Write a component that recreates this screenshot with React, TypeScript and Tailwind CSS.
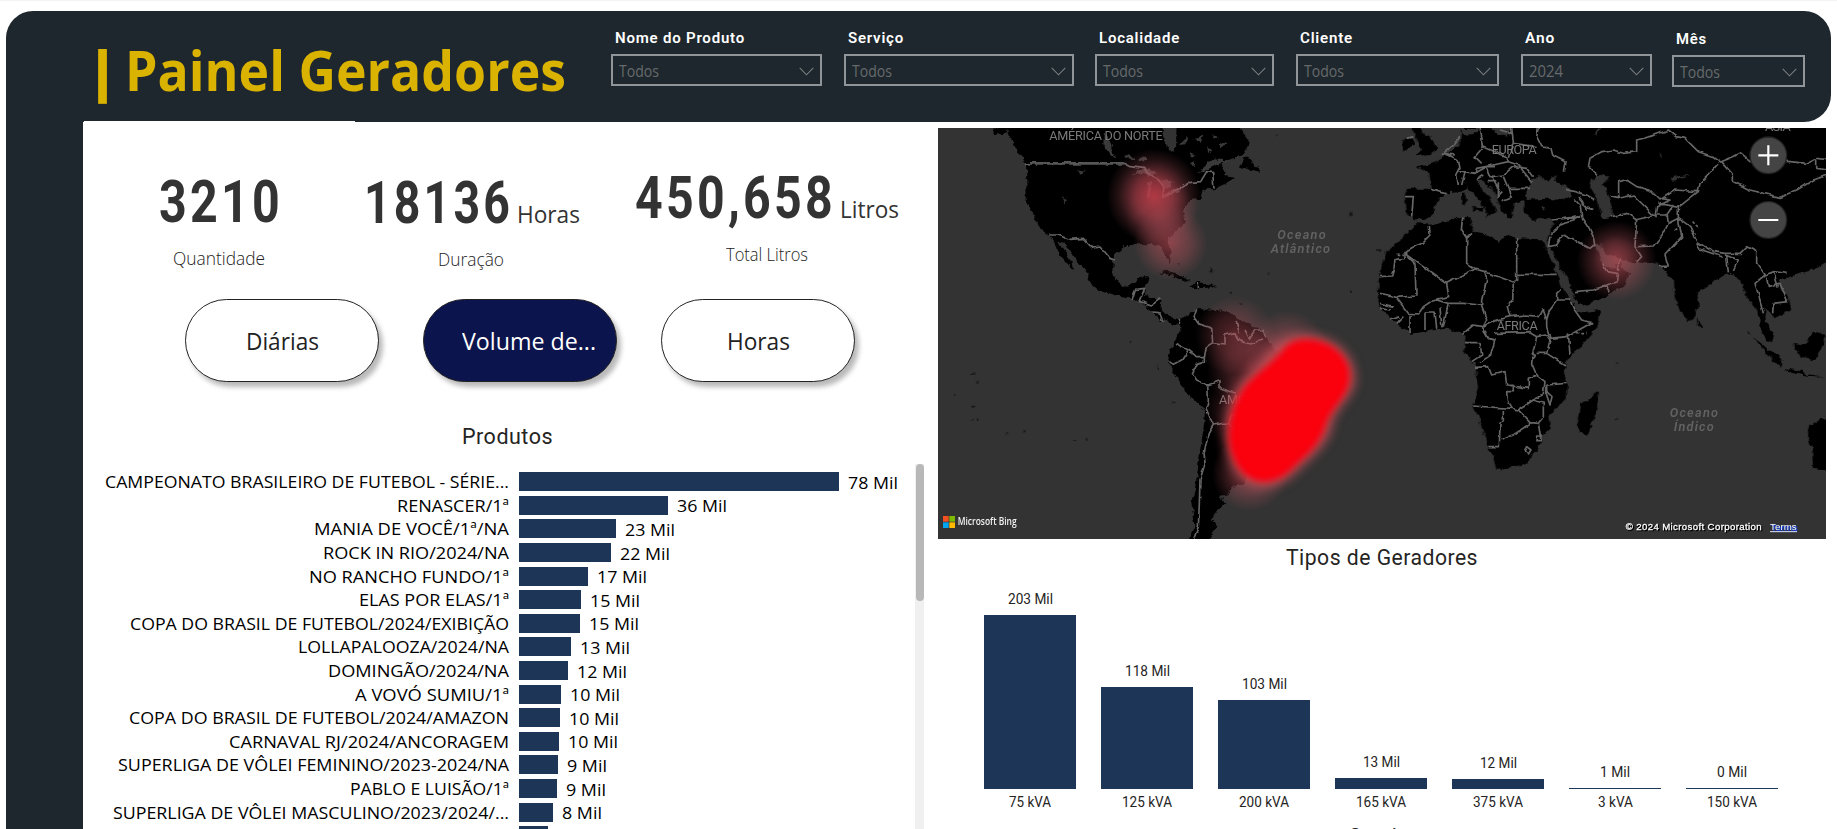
import { useLayoutEffect, useRef } from "react";
import type { ReactNode } from "react";
import clsx from "clsx";

const SEGOE = "font-['Open_Sans',sans-serif]";
const DIN = "font-['Roboto',sans-serif]";

/** One line of text, condensed or widened to fill exactly `w` pixels. */
function Fit({ w, className, children }: { w: number; className?: string; children: ReactNode }) {
  const ref = useRef<HTMLSpanElement>(null);
  useLayoutEffect(() => {
    const el = ref.current;
    if (!el) return;
    el.style.transform = "none";
    const natural = el.getBoundingClientRect().width;
    if (natural) el.style.transform = `scaleX(${w / natural})`;
  }, [w]);
  return (
    <span className={clsx("block shrink-0 whitespace-nowrap", className)} style={{ width: w }}>
      <span ref={ref} className="inline-block origin-left">
        {children}
      </span>
    </span>
  );
}

const filters = [
  { label: "Nome do Produto", lw: 130, value: "Todos", vw: 40, box: "w-[211px]", gap: "", top: "" },
  { label: "Serviço", lw: 56, value: "Todos", vw: 40, box: "w-[230px]", gap: "ml-[22px]", top: "" },
  { label: "Localidade", lw: 81, value: "Todos", vw: 40, box: "w-[179px]", gap: "ml-[21px]", top: "" },
  { label: "Cliente", lw: 53, value: "Todos", vw: 40, box: "w-[203px]", gap: "ml-[22px]", top: "" },
  { label: "Ano", lw: 30, value: "2024", vw: 34, box: "w-[131px]", gap: "ml-[22px]", top: "" },
  { label: "Mês", lw: 31, value: "Todos", vw: 40, box: "w-[133px]", gap: "ml-[20px]", top: "mt-px" },
];

const products: [string, number, string, number][] = [
  ["CAMPEONATO BRASILEIRO DE FUTEBOL - SÉRIE...", 404, "78 Mil", 320],
  ["RENASCER/1ª", 112, "36 Mil", 149],
  ["MANIA DE VOCÊ/1ª/NA", 195, "23 Mil", 97],
  ["ROCK IN RIO/2024/NA", 186, "22 Mil", 92],
  ["NO RANCHO FUNDO/1ª", 200, "17 Mil", 69],
  ["ELAS POR ELAS/1ª", 150, "15 Mil", 61.5],
  ["COPA DO BRASIL DE FUTEBOL/2024/EXIBIÇÃO", 379, "15 Mil", 61],
  ["LOLLAPALOOZA/2024/NA", 211, "13 Mil", 52],
  ["DOMINGÃO/2024/NA", 181, "12 Mil", 49],
  ["A VOVÓ SUMIU/1ª", 154, "10 Mil", 42],
  ["COPA DO BRASIL DE FUTEBOL/2024/AMAZON", 380, "10 Mil", 41],
  ["CARNAVAL RJ/2024/ANCORAGEM", 280, "10 Mil", 40],
  ["SUPERLIGA DE VÔLEI FEMININO/2023-2024/NA", 391, "9 Mil", 39],
  ["PABLO E LUISÃO/1ª", 159, "9 Mil", 38],
  ["SUPERLIGA DE VÔLEI MASCULINO/2023/2024/...", 396, "8 Mil", 34],
  ["", 0, "", 29],
];

const types: [string, number, string, number, number][] = [
  ["203 Mil", 45, "75 kVA", 42, 174.5],
  ["118 Mil", 45, "125 kVA", 50, 102],
  ["103 Mil", 45, "200 kVA", 50, 89],
  ["13 Mil", 37, "165 kVA", 50, 11],
  ["12 Mil", 37, "375 kVA", 50, 10.5],
  ["1 Mil", 30, "3 kVA", 35, 1.5],
  ["0 Mil", 30, "150 kVA", 50, 1.5],
];

function Header() {
  return (
    <header className="mx-[6px] mt-[10px] flex h-[111px] shrink-0 rounded-r-[27px] rounded-tl-[27px] bg-[#1e272d]">
      <h1 className={clsx("flex w-[605px] shrink-0 pl-[74px] pt-[25px] text-[55px] font-bold leading-[68px] text-[#dab200]", SEGOE)}>
        <Fit w={45}>|</Fit>
        <Fit w={441}>Painel Geradores</Fit>
      </h1>
      {filters.map((f) => (
        <div key={f.label} className={clsx("shrink-0 pt-[17px]", f.gap, f.top)}>
          <Fit w={f.lw} className={clsx("ml-[4px] text-[15.5px] font-semibold leading-[20px] tracking-[0.8px] text-white", DIN)}>
            {f.label}
          </Fit>
          <div className={clsx("mt-[6px] flex h-[32px] items-center justify-between border-2 border-[#8f9598] pl-[6px] pr-[6px]", f.box)}>
            <Fit w={f.vw} className={clsx("mt-[2px] text-[15.5px] leading-[20px] text-[#666a6c]", SEGOE)}>
              {f.value}
            </Fit>
            <svg className="mt-[2px] h-[9px] w-[15px]" viewBox="0 0 15 9" fill="none" stroke="#7b7f81" strokeWidth="1.1">
              <path d="M.7 .8 7.5 7.8 14.3 .8" />
            </svg>
          </div>
        </div>
      ))}
    </header>
  );
}

function Kpi(p: { value: string; w: number; unit?: string; uw?: number; label: string; lw: number; className: string; labelClass: string }) {
  return (
    <div className={clsx("flex shrink-0 flex-col items-center", p.className)}>
      <div className="flex items-baseline gap-[4px]">
        <Fit w={p.w} className={clsx("text-[59px] font-bold leading-[60px] tracking-[4px] text-[#333]", DIN)}>
          {p.value}
        </Fit>
        {p.unit && (
          <Fit w={p.uw ?? 60} className={clsx("text-[24px] leading-[30px] text-[#333]", SEGOE)}>
            {p.unit}
          </Fit>
        )}
      </div>
      <Fit w={p.lw} className={clsx("text-[18px] font-light leading-[20px] text-[#222]", SEGOE, p.labelClass)}>
        {p.label}
      </Fit>
    </div>
  );
}

function Pill({ label, w, active }: { label: string; w: number; active?: boolean }) {
  return (
    <button
      className={clsx(
        "flex h-[83px] w-[194px] shrink-0 items-center justify-center rounded-full border border-[#222] text-[24px] leading-[30px] shadow-[4px_5px_5px_rgba(0,0,0,0.28)]",
        SEGOE,
        active ? "bg-[#0c144d] pl-[18px] text-white" : "bg-white text-[#222]",
      )}
    >
      <Fit w={w} className="mt-px text-left">
        {label}
      </Fit>
    </button>
  );
}

function Products() {
  return (
    <div className="mt-[15px] flex h-[365px] overflow-hidden">
      <div className="w-[831px] shrink-0 pt-[6px]">
        {products.map(([name, w, val, bar], i) => (
          <div key={i} className={clsx("flex h-[23.6px] items-center text-[17px] leading-[23px] text-black", SEGOE)}>
            <div className="mr-[10px] flex w-[425px] shrink-0 justify-end">
              {name && <Fit w={w}>{name}</Fit>}
            </div>
            <div className="h-[19px] bg-[#1d3557]" style={{ width: bar }} />
            {val && (
              <Fit w={val.length > 5 ? 50 : 40} className="ml-[9px] mt-px">
                {val}
              </Fit>
            )}
          </div>
        ))}
      </div>
      <div className="h-full w-[9px] bg-[#f0f0f0]">
        <div className="ml-px h-[137px] w-[8px] rounded-full bg-[#b8b8b8]" />
      </div>
    </div>
  );
}

function WorldMap() {
  const label = "font-['Roboto',sans-serif]";
  return (
    <svg className="block h-[411px] w-[888px] bg-[#333]" viewBox="24 24 2664 1233" fill="none">
      <defs>
        <filter id="rough" x="0" y="0" width="2700" height="1270" filterUnits="userSpaceOnUse" colorInterpolationFilters="sRGB">
          <feTurbulence type="fractalNoise" baseFrequency="0.05" numOctaves="3" seed="4" />
          <feDisplacementMap in="SourceGraphic" scale="18" xChannelSelector="R" yChannelSelector="G" />
        </filter>
        <filter id="wavy" x="0" y="0" width="2700" height="1270" filterUnits="userSpaceOnUse" colorInterpolationFilters="sRGB">
          <feTurbulence type="fractalNoise" baseFrequency="0.04" numOctaves="2" seed="4" />
          <feDisplacementMap in="SourceGraphic" scale="12" xChannelSelector="R" yChannelSelector="G" />
        </filter>
        <filter id="soft" x="800" y="580" width="600" height="660" filterUnits="userSpaceOnUse">
          <feGaussianBlur stdDeviation="9" />
        </filter>
        <filter id="halo" x="750" y="540" width="700" height="760" filterUnits="userSpaceOnUse">
          <feGaussianBlur stdDeviation="16" />
        </filter>
        <radialGradient id="heat">
          <stop offset="0" stopColor="#c03844" stopOpacity=".92" />
          <stop offset=".4" stopColor="#b54450" stopOpacity=".66" />
          <stop offset=".75" stopColor="#a8505a" stopOpacity=".22" />
          <stop offset="1" stopColor="#a8505a" stopOpacity="0" />
        </radialGradient>
        <radialGradient id="warm">
          <stop offset="0" stopColor="#c0505a" stopOpacity=".6" />
          <stop offset=".5" stopColor="#b5525c" stopOpacity=".38" />
          <stop offset="1" stopColor="#a8505a" stopOpacity="0" />
        </radialGradient>
      </defs>

      <g filter="url(#rough)">
        {/* Americas */}
        <g fill="#000">
          <path d="M225 0 240 50 265 100 288 128 290 240 305 282 328 320 358 345 372 368 384 395 405 422 430 454 426 430 402 390 386 362 402 368 428 402 448 432 476 460 472 482 502 507 560 527 600 532 640 553 668 575 690 597 722 610 750 614 770 590 745 597 715 590 692 568 694 537 642 528 645 500 657 470 625 475 610 492 575 502 550 462 552 402 580 379 620 375 650 370 690 376 704 402 720 430 723 400 710 358 766 306 760 270 786 240 816 235 820 206 850 208 918 176 890 164 874 150 880 124 938 108 962 68 940 40 925 0 740 0 738 90 722 96 700 50 690 0Z" />
          <path d="M930 140 945 112 962 118 990 156 965 150Z M685 458 712 452 782 480 760 483 722 466Z M778 501 800 485 835 493 862 502 800 505Z M750 612 768 588 806 564 872 572 905 580 925 600 990 628 1010 650 1030 690 1100 725 1190 720 1210 780 1160 900 1090 1000 980 1040 950 1070 945 1092 905 1100 896 1126 868 1130 886 1146 865 1170 845 1196 862 1220 838 1260 778 1260 796 1218 784 1150 796 1100 808 1010 820 930 826 866 772 826 745 780 714 724 722 684 752 634Z" />
          <path d="M195 24H235L228 40 195 42Z M840 445l10 12M745 432h6" stroke="#000" strokeWidth="3" />
        </g>
        <g fill="#3a3a3a">
          <path d="M603 165 640 142 684 160 660 168 640 158Z M648 232 652 184 668 184 660 232Z M676 174 728 186 722 206 700 196Z M695 234 735 208 762 200 735 220Z M522 40 535 60 556 112 545 108 520 70Z M586 104l30 6-4 8-26-4Z M632 110h16v14h-16Z M444 148l22 4-14 10Z M398 232l12 8-4 14Z M800 160 850 118 905 122 865 132 830 150Z M745 70l30-15-6 20Z M790 55l30-8-8 18Z M850 45l14 6-14 8Z M780 95l14 8-10 14Z M830 80l14 8-6 12Z M870 65l20 8-20 8Z M780 135l10-10 4 14Z" />
        </g>
        {/* Europe, Asia, Africa */}
        <g transform="translate(1350 0)">
          <g fill="#000">
            <path d="M245 0 242 52 234 78 190 106 168 124 108 140 148 158 155 206 80 206 74 228 82 290 104 297 132 300 160 288 162 262 182 236 204 220 236 216 258 202 286 226 312 262 322 290 350 276 336 246 300 204 288 182 312 182 346 218 362 270 386 296 402 268 396 250 432 240 434 276 462 300 512 290 520 312 508 345 500 380 512 386 556 470 578 514 595 556 642 546 690 520 732 500 750 460 722 440 722 420 762 430 822 425 848 442 862 466 882 476 884 530 902 572 925 604 942 590 956 558 952 522 988 496 1022 470 1042 460 1070 468 1086 492 1094 522 1124 560 1140 592 1146 640 1172 670 1180 640 1154 604 1152 566 1172 578 1184 594 1234 570 1226 532 1200 505 1198 478 1232 470 1292 450 1350 425V0Z" />
            <path d="M112 310 148 314 242 293 272 295 276 330 330 350 356 366 376 345 410 355 482 358 496 382 520 430 546 500 580 556 592 578 664 570 652 620 602 680 574 702 558 726 552 760 564 790 560 836 530 866 505 890 512 930 486 946 480 976 440 1030 400 1040 350 1050 340 1014 324 980 310 940 300 900 280 860 296 796 286 740 275 726 252 700 256 660 245 640 200 626 150 632 90 642 56 618 18 582-6 552-6 524-2 460 18 400 75 345Z" />
            <path d="M110 0 128 40 160 62 176 90 150 106 108 108 126 86 112 62 96 24Z M66 62 96 50 104 76 70 92Z M950 594 966 620 955 624Z M1105 640 1140 668 1206 716 1206 740 1180 724 1140 676 1100 630Z M1210 744 1250 750 1292 764 1336 770 1290 768 1240 760Z M1240 672 1272 676 1300 634 1334 645 1326 680 1306 720 1260 714Z M1350 888 1285 914 1284 950 1300 1000 1298 1046 1350 1054Z M652 810 658 840 640 900 625 940 600 942 592 910 600 850 636 834Z M245 218h12v38h-10Z M275 262l40 0-10 14-24-8Z" />
          </g>
          <g fill="#333">
            <path d="M440 226 450 186 480 164 500 186 530 164 522 186 566 204 576 226 545 240 500 236 440 240Z M630 182 660 164 690 170 668 192 682 216 692 240 696 290 670 296 655 270 650 236 632 206Z M640 368 660 370 682 402 716 414 720 428 704 444 676 440 664 420Z M240 24 300 24 280 42 250 45Z M330 24 400 24 380 50 345 38Z M480 262l16 0-4 10Z M838 95l8 18-8 2Z M870 172l60-8-50 18Z M640 40l22-16-10 20Z" />
          </g>
        </g>
        <g fill="#151515">
          <path d="M124 758h12v6h-12Z M138 780l6 6-8 2Z M68 822h8v5h-8Z M122 860h10v5h-10Z M124 900h6v4h-6Z M140 896h5v4h-5Z M228 938h6v5h-6Z M280 934h6v4h-6Z M432 958h6v5h-6Z M470 952h5v4h-5Z M602 665h5v5h-5Z M728 838l10 12-8-2Z M1258 278h7v6h-7Z M1262 512h6v6h-6Z M1014 458h5v4h-5Z M826 444l24 16-6 0Z M1036 44h6v5h-6Z M1335 388h20v4h-20Z M2055 724h6v4h-6Z M2058 896h6v4h-6Z M900 515h5v6h-5Z M928 550h5v5h-5Z M680 740h4v12h-4Z" />
        </g>
      </g>

      {/* Borders */}
      <g filter="url(#wavy)">
        <g stroke="#666" strokeWidth="5" strokeLinejoin="round">
          <path strokeWidth="8" stroke="#565656" d="M300 130H580" />
          <path d="M580 130 600 140 640 145 682 176 702 202 698 232 736 212 775 188 812 185 830 155 848 158 852 208M285 130 300 136M358 345 380 345 420 358 460 355 485 382 510 378 540 415 555 420M606 540 616 508 644 505 628 545 642 548 665 555 692 536M668 576 690 578 698 605M748 596V612M805 486V504M800 568 792 592 806 612 845 625 848 668 885 672 885 645 915 638 925 662 960 672 1000 660M918 600 928 640M945 630 958 655 975 630 1000 630 1008 652M735 670 775 690 755 720 730 733 718 725M775 690 800 710 823 710 830 680 848 668M823 725 800 730 787 760 800 780 833 795 870 782 870 805 915 820M823 705V730M833 795 835 840 828 865 850 915 880 910 895 910 905 885 930 880M895 910 915 928M850 915 835 940 822 1000 825 1030 810 1080 808 1150 805 1220 790 1260" />
          <g transform="translate(1350 0)">
            <path d="M148 315 150 345 125 370 80 395 80 405 200 490 285 447 260 430 260 355 244 330 248 293M260 355 276 340M285 447 315 455 400 487 410 480V355M412 463H530M75 395V415L45 418 42 445 35 468 0 470M80 405 105 432 108 528 48 532 25 525 0 520M200 490 206 530 160 540 130 560 115 582 85 580 70 560 48 532M315 455 320 480 305 540 305 560 320 600 310 620 325 655 346 660M305 555 250 550 205 550 170 540M205 550 190 620M400 487 398 540 382 560 390 590 350 600 330 610 310 618M390 590 440 585 480 590 490 570 500 600 500 620 510 655 560 650 635 608 605 600 580 565 570 540 530 540 508 570 500 600M530 540 530 520 545 505M135 578V630M135 576H165L170 625M180 565 186 622M90 585V640M50 610 70 590M0 550 40 560M0 565 30 570M30 600 60 590M250 640 280 615 310 620" />
            <path d="M255 668 300 668 305 705 275 725M285 742 325 740 335 765 375 755 380 795 445 805 445 775 470 765 495 785 490 825 460 840M310 630 325 655 345 660 330 710 300 730M345 640 450 638 470 650 460 690 455 730 470 765M380 795 400 796V815H380L382 845 395 865 278 858M395 865 415 870 460 840 490 850 490 890 475 910 450 908 415 870M370 870V905L360 910 358 980 325 980M365 960 400 945 450 910M475 910 482 955M470 700H500L555 735M470 650 500 645 510 660 500 700M565 640 570 705M500 795 560 790M500 795 500 825 510 855 516 830 500 815M440 980 453 990 445 1002 432 994ZM470 948 484 948 482 962 468 962ZM455 700 466 706 460 720" />
            <path d="M625 140 630 115 665 95 700 90 730 100 770 95 770 60 810 50 865 30 890 50 915 55 955 95 1000 110 1022 126 1060 110 1080 100 1110 125 1150 120 1230 125 1280 130 1310 115 1345 120M1345 150 1310 145 1310 120M1025 125 1060 165 1060 185 1110 210 1200 232 1250 210 1300 180 1345 165M1015 130 985 165 960 190 955 215 885 210 840 240 810 210 770 200 740 180 716 185 716 235 760 225 825 290 830 260 870 240 845 236M690 230 716 236M835 250 895 262 955 215M625 140 650 165M600 255 605 290 625 320 640 350 645 380M695 290 740 280 770 300 765 380 785 410 770 425M765 300 830 285 860 285 880 255M775 380 820 378 850 340 865 310 862 285M865 310 895 295 905 350 855 405 865 438 840 440M895 262 895 295 930 320 950 365 1000 395 1035 400 1080 400 1100 380 1130 395 1130 430 1155 465 1180 455 1220 460M950 370 960 388 1030 412M1040 405 1045 460M1035 405 1075 420 1060 450M1155 465 1125 490 1140 540 1150 580M1160 470 1165 500 1200 490 1222 545 1180 550 1178 580M1180 455 1195 500" />
            <path d="M515 300 600 290M558 208 620 225 645 240M580 235 600 255 640 265M600 230 620 270M510 345 545 310 580 300 600 290M550 345 630 385 642 375M510 350 505 380 530 375 548 345M585 515 640 510 680 495 710 485 712 460 680 455 668 430M680 495 688 518M718 412 715 450M240 50 225 72 190 100 235 120 240 145 230 165 235 195M190 100 225 105M235 152 285 160 320 140 345 140M300 24 310 80 285 110 305 130M310 80 380 110 385 125 340 135M395 24 400 65 385 110M360 30 395 40M400 70 470 80M475 24 470 50 485 80 510 85 515 105 555 125 550 155M385 125 415 135 455 185M320 145 330 170 370 165 400 140 440 145 458 170M330 165 345 190 362 218M310 165 290 178M370 170 385 205 450 205M355 190 355 230 370 215M365 245 400 232M385 205 392 235M320 185 350 185M255 155 245 195M285 160 290 145 340 135M155 208 200 222M75 230 100 230 95 290M80 55 100 50" />
            <path d="M885 330 900 322M938 305 955 322M940 345 950 340M50 403H75M590 638H620" strokeDasharray="8 6" />
          </g>
        </g>
      </g>

      {/* Place names */}
      <g className={label} fill="#7a7a7a" fontSize="38">
        <text x="358" y="61" textLength="340">AMÉRICA DO NORTE</text>
        <text x="1685" y="102" textLength="135">EUROPA</text>
        <text x="1700" y="629" textLength="123">AFRICA</text>
        <text x="2505" y="33" textLength="77">ASIA</text>
        <text x="867" y="851" textLength="290">AMÉRICA DO SUL</text>
      </g>
      <g className={label} fill="#626262" fontSize="38" fontStyle="italic" fontWeight="600">
        <text x="1042" y="357" textLength="145">Oceano</text>
        <text x="1022" y="398" textLength="178">Atlântico</text>
        <text x="2219" y="891" textLength="145">Oceano</text>
        <text x="2231" y="932" textLength="120">Índico</text>
      </g>

      {/* Heat layer */}
      <circle cx="672" cy="228" r="142" fill="url(#heat)" />
      <circle cx="695" cy="290" r="110" fill="url(#warm)" opacity=".55" />
      <circle cx="722" cy="370" r="112" fill="url(#warm)" />
      <circle cx="2060" cy="422" r="120" fill="url(#warm)" />
      <circle cx="2057" cy="412" r="66" fill="url(#warm)" opacity=".45" />
      <circle cx="915" cy="645" r="120" fill="url(#warm)" opacity=".75" />
      <circle cx="960" cy="740" r="130" fill="url(#warm)" opacity=".8" />
      <circle cx="1070" cy="700" r="130" fill="url(#warm)" />
      <circle cx="930" cy="870" r="110" fill="url(#warm)" opacity=".5" />
      <circle cx="960" cy="1060" r="115" fill="url(#warm)" />
      <path
        filter="url(#halo)"
        fill="#c2505a"
        fillOpacity=".9"
        d="M1130 645C1222 647 1284 715 1274 790 1264 838 1212 868 1206 918 1192 978 1142 1014 1102 1052 1072 1084 1040 1100 1000 1100 928 1100 890 1022 883 957 880 880 905 815 945 770 985 725 1010 700 1040 672 1065 652 1095 645 1130 645Z"
      />
      <path
        filter="url(#soft)"
        fill="#fb0311"
        stroke="#fb0311"
        strokeWidth="6"
        d="M1130 660C1210 664 1262 720 1255 780 1250 830 1200 860 1185 910 1170 970 1130 1000 1090 1038 1060 1070 1030 1082 1000 1082 940 1080 906 1020 900 960 898 890 925 820 962 785 1005 745 1045 715 1062 690 1080 668 1100 660 1130 660Z"
      />

      {/* Zoom controls */}
      <g stroke="#222" strokeWidth="4" fill="#444">
        <circle cx="2515" cy="106" r="55" />
        <circle cx="2515" cy="300" r="55" />
      </g>
      <path d="M2485 106h60M2515 76v60M2485 300h60" stroke="#fff" strokeWidth="6.5" />

      {/* Attribution */}
      <g transform="translate(39 1188)">
        <path fill="#f25022" d="M0 0h17v17H0z" />
        <path fill="#7fba00" d="M19 0h17v17H19z" />
        <path fill="#00a4ef" d="M0 19h17v17H0z" />
        <path fill="#ffb900" d="M19 19h17v17H19z" />
      </g>
      <text x="83" y="1216" textLength="177" lengthAdjust="spacingAndGlyphs" fill="#f2f2f2" fontSize="30" fontWeight="600" className={SEGOE}>
        Microsoft Bing
      </text>
      <g className="font-['Liberation_Sans',sans-serif]" fontSize="29">
        <text x="2090" y="1233" textLength="408" fill="#000" stroke="#000" strokeWidth="2">© 2024 Microsoft Corporation</text>
        <text x="2087" y="1230" textLength="408" fill="#fff" stroke="#fff" strokeWidth=".8">© 2024 Microsoft Corporation</text>
        <text x="2523" y="1232" textLength="80" fill="#1a3fbf" stroke="#1a3fbf" strokeWidth="2">Terms</text>
        <text x="2520" y="1230" textLength="80" fill="#fff">Terms</text>
        <path d="M2520 1235h81" stroke="#dbe3ff" strokeWidth="3" />
      </g>
    </svg>
  );
}

function TypesChart() {
  return (
    <div className={clsx("flex gap-[25px] pl-[46px] text-[14px] leading-[16px] text-[#252423]", DIN)}>
      {types.map(([val, vw, cat, cw, h]) => (
        <div key={cat} className="flex w-[92px] shrink-0 flex-col items-center">
          <div className="flex h-[220px] flex-col items-center justify-end">
            <Fit w={vw} className="mb-[8px]">
              {val}
            </Fit>
            <div className="w-[92px] bg-[#1d3557]" style={{ height: h }} />
          </div>
          <Fit w={cw} className="mt-[5px]">
            {cat}
          </Fit>
        </div>
      ))}
    </div>
  );
}

const titleClass = "text-[22px] font-[450] leading-[24px] tracking-[0.5px] text-[#252423]";

export default function App() {
  return (
    <div className="flex h-[829px] w-[1837px] flex-col overflow-hidden bg-white">
      <div className="h-px shrink-0 bg-[#f3f3f3]" />
      <Header />
      <div className="flex min-h-0 flex-1">
        <div className="ml-[6px] w-[77px] shrink-0 bg-[#1e272d]" />
        <main className="-mt-px ml-px w-[854px] shrink-0">
          <div className="h-px w-[271px] bg-white" />
          <section className="flex h-[177px]">
            <Kpi value="3210" w={124} label="Quantidade" lw={92} className="ml-[75px] mt-[50px]" labelClass="mt-[16px] -ml-[4px]" />
            <Kpi value="18136" w={149} unit="Horas" uw={63} label="Duração" lw={66} className="ml-[81px] mt-[51px]" labelClass="mt-[16px] -ml-[3px]" />
            <Kpi value="450,658" w={201} unit="Litros" uw={59} label="Total Litros" lw={82} className="ml-[55px] mt-[46px]" labelClass="mt-[16px]" />
          </section>
          <section className="flex gap-[44px] pl-[101px]">
            <Pill label="Diárias" w={73} />
            <Pill label="Volume de..." w={134} active />
            <Pill label="Horas" w={63} />
          </section>
          <h2 className={clsx("mt-[43px] pl-[378px]", titleClass, DIN)}>
            <Fit w={91}>Produtos</Fit>
          </h2>
          <Products />
        </main>
        <aside className="w-[888px] shrink-0 pt-[6px]">
          <WorldMap />
          <h2 className={clsx("mt-[7px] pl-[348px]", titleClass, DIN)}>
            <Fit w={192}>Tipos de Geradores</Fit>
          </h2>
          <div className="-mt-px">
            <TypesChart />
          </div>
          <h2 className={clsx("mt-[15px] pl-[411px]", titleClass, DIN)}>
            <Fit w={72}>Serviço</Fit>
          </h2>
        </aside>
      </div>
    </div>
  );
}
